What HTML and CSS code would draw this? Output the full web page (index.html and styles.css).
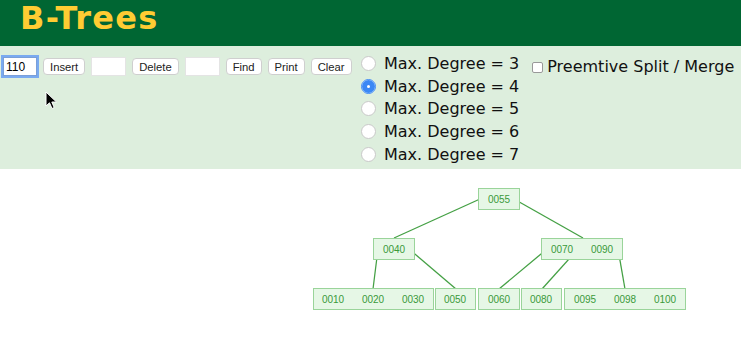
FILE: index.html
```html
<!DOCTYPE html>
<html lang="en">
<head>
  <meta charset="UTF-8">
  <title>B-Trees</title>
  <link rel="stylesheet" href="styles.css">
</head>
<body>

<div class="header">
  <h1>B-Trees</h1>
</div>

<div class="controls">
  <div class="ops">
    <input type="text" class="field focused" value="110">
    <button>Insert</button>
    <input type="text" class="field">
    <button>Delete</button>
    <input type="text" class="field">
    <button>Find</button>
    <button>Print</button>
    <button>Clear</button>
  </div>

  <div class="degrees">
    <label><input type="radio" name="deg">Max. Degree = 3</label>
    <label><input type="radio" name="deg" checked>Max. Degree = 4</label>
    <label><input type="radio" name="deg">Max. Degree = 5</label>
    <label><input type="radio" name="deg">Max. Degree = 6</label>
    <label><input type="radio" name="deg">Max. Degree = 7</label>
  </div>

  <label class="preempt"><input type="checkbox">Preemtive Split / Merge</label>

  <svg class="cursor" width="14" height="20" viewBox="0 0 14 20">
    <path d="M1 1 L1 15 L4.5 11.8 L7 17.5 L9.2 16.5 L6.8 11 L11.5 11 Z" fill="#000" stroke="#fff" stroke-width="1"/>
  </svg>
</div>

<svg class="tree" width="741" height="168" viewBox="0 169 741 168">
  <g class="edges">
    <line x1="480" y1="199" x2="394" y2="238"/>
    <line x1="514" y1="199" x2="583" y2="238"/>
    <line x1="378" y1="249" x2="373" y2="289"/>
    <line x1="409" y1="249" x2="456" y2="289"/>
    <line x1="547" y1="249" x2="499" y2="289"/>
    <line x1="578" y1="249" x2="542" y2="289"/>
    <line x1="618" y1="249" x2="625" y2="289"/>
  </g>
  <g class="nodes">
    <rect x="478.5" y="188.5" width="41" height="21"/>
    <rect x="373.5" y="238.5" width="41" height="21"/>
    <rect x="541.5" y="238.5" width="81" height="21"/>
    <rect x="313.5" y="288.5" width="120" height="21"/>
    <rect x="435.5" y="288.5" width="40" height="21"/>
    <rect x="478.5" y="288.5" width="41" height="21"/>
    <rect x="521.5" y="288.5" width="40" height="21"/>
    <rect x="564.5" y="288.5" width="121" height="21"/>
  </g>
  <g class="keys">
    <text x="499" y="203">0055</text>
    <text x="394" y="253">0040</text>
    <text x="562" y="253">0070</text>
    <text x="602" y="253">0090</text>
    <text x="333" y="303">0010</text>
    <text x="373" y="303">0020</text>
    <text x="413" y="303">0030</text>
    <text x="455" y="303">0050</text>
    <text x="499" y="303">0060</text>
    <text x="541" y="303">0080</text>
    <text x="585" y="303">0095</text>
    <text x="625" y="303">0098</text>
    <text x="665" y="303">0100</text>
  </g>
</svg>

</body>
</html>
```

FILE: styles.css
```css
body {
  margin: 0;
  background: #fff;
  font-family: "DejaVu Sans", Verdana, sans-serif;
}
.header {
  background-color: #006633;
  height: 46px;
  padding-left: 20px;
}
.header h1 {
  margin: 0;
  font-size: 32px;
  line-height: 36px;
  letter-spacing: 1.3px;
  color: #ffcc33;
  font-weight: bold;
}
.controls {
  position: relative;
  background-color: #ddeedd;
  height: 123px;
  display: flex;
  align-items: flex-start;
}
.ops {
  display: flex;
  flex-shrink: 0;
  align-items: center;
  gap: 6px;
  padding: 11px 0 0 3px;
  width: 349px;
}
.field {
  box-sizing: border-box;
  flex-shrink: 0;
  width: 35px;
  height: 19px;
  border: 1px solid #e4e4e4;
  background: #fff;
  font: 12px "Liberation Sans", Arial, sans-serif;
  padding: 0 2px;
  margin: 0;
}
.field.focused {
  border-color: #7a9fd8;
  box-shadow: 0 0 0 2px #7aaaf0;
  outline: none;
  width: 34px;
}
button {
  -webkit-appearance: none;
  appearance: none;
  flex-shrink: 0;
  background: #fff;
  border: 1px solid #cfcfcf;
  border-radius: 4px;
  height: 17px;
  padding: 0 6px;
  font: 11.25px "Liberation Sans", Arial, sans-serif;
  color: #222;
  margin: 0;
}
.degrees {
  display: flex;
  flex-direction: column;
  padding: 6px 0 0 9px;
}
.degrees label {
  display: flex;
  align-items: center;
  height: 22.7px;
  font-size: 16px;
  color: #111;
}
.degrees input {
  -webkit-appearance: none;
  appearance: none;
  width: 15px;
  height: 15px;
  margin: 0 8px 0 0;
  border-radius: 50%;
  border: 1px solid #c9c9c9;
  background: #fff;
}
.degrees input:checked {
  border-color: #3b88f5;
  background: #fff;
  box-shadow: inset 0 0 0 5px #3b88f5;
}
.preempt {
  display: flex;
  align-items: center;
  padding: 11px 0 0 13px;
  font-size: 16px;
  color: #111;
  white-space: nowrap;
}
.preempt input {
  -webkit-appearance: none;
  appearance: none;
  width: 11px;
  height: 11px;
  margin: 2px 4px 0 0;
  border: 1px solid #999;
  border-radius: 2px;
  background: #fff;
}
.cursor {
  position: absolute;
  left: 45px;
  top: 45px;
}
.tree {
  display: block;
}
.edges line {
  stroke: #44a044;
  stroke-width: 1.3;
}
.nodes rect {
  fill: #e6f7e6;
  stroke: #9ad49a;
  stroke-width: 1;
}
.keys text {
  font-family: "Liberation Sans", Arial, sans-serif;
  font-size: 10px;
  fill: #3a9a3a;
  text-anchor: middle;
}
```
